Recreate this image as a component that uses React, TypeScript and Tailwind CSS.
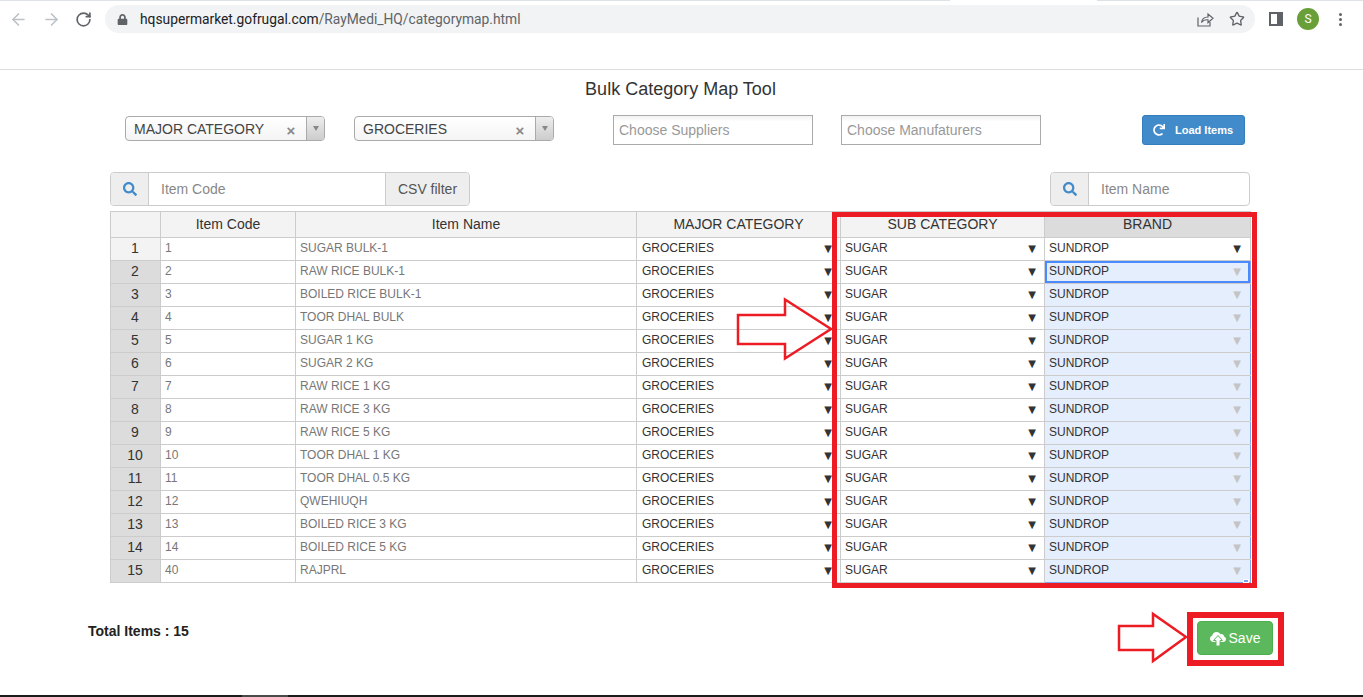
import { ArrowLeft, ArrowRight, RotateCw, Star } from "lucide-react"
import { FaLock, FaRedo, FaSearch } from "react-icons/fa"

const items = [
    ["1", "SUGAR BULK-1"],
    ["2", "RAW RICE BULK-1"],
    ["3", "BOILED RICE BULK-1"],
    ["4", "TOOR DHAL BULK"],
    ["5", "SUGAR 1 KG"],
    ["6", "SUGAR 2 KG"],
    ["7", "RAW RICE 1 KG"],
    ["8", "RAW RICE 3 KG"],
    ["9", "RAW RICE 5 KG"],
    ["10", "TOOR DHAL 1 KG"],
    ["11", "TOOR DHAL 0.5 KG"],
    ["12", "QWEHIUQH"],
    ["13", "BOILED RICE 3 KG"],
    ["14", "BOILED RICE 5 KG"],
    ["40", "RAJPRL"],
]

function BrowserBar() {
    return (
        <div className="h-[70px] shrink-0 border-b border-[#dcdcdc]">
            <div className="flex h-px">
                <div className="w-[950px] bg-[#dee1e6]" />
                <div className="w-[147px] bg-white" />
                <div className="flex-1 bg-[#dee1e6]" />
            </div>
            <div className="flex items-center h-[28px] mt-1 font-['Roboto',sans-serif]">
                <ArrowLeft size={19} strokeWidth={2} className="ml-[9px] text-[#bdc1c6]" />
                <ArrowRight size={19} strokeWidth={2} className="ml-[14px] text-[#bdc1c6]" />
                <RotateCw size={17} strokeWidth={2.4} className="ml-[14px] text-[#5f6368]" />
                <div className="ml-[13px] w-[1150px] h-[28px] rounded-full bg-[#f1f3f4] flex items-center">
                    <FaLock size={11} className="ml-[12px] text-[#5f6368]" />
                    <span className="ml-[12px] text-[13.8px] text-[#202124]">
                        hqsupermarket.gofrugal.com<span className="text-[#5f6368]">/RayMedi_HQ/categorymap.html</span>
                    </span>
                    <svg width="18" height="18" viewBox="0 0 18 18" fill="none" stroke="#5f6368" strokeWidth="1.2" className="ml-auto">
                        <path d="M2 7.5V16H14V12" />
                        <path d="M5.5 12.5C6 9 8.5 7 12 7V4l5 4.3-5 4.3V9.8c-2.800-.2-5 .6-6.500 2.700z" />
                    </svg>
                    <Star size={16} strokeWidth={2} className="ml-[15px] mr-[10px] text-[#5f6368]" />
                </div>
                <div className="ml-[14px] w-[14px] h-[14px] border-[2.5px] border-[#5f6368] border-r-[6px] bg-white" />
                <div className="ml-[14px] w-[22px] h-[22px] rounded-full bg-[#689f38] text-white text-[12px] flex items-center justify-center">S</div>
                <div className="ml-[20px] flex flex-col gap-[2px]">
                    <span className="w-[3px] h-[3px] rounded-full bg-[#5f6368]" />
                    <span className="w-[3px] h-[3px] rounded-full bg-[#5f6368]" />
                    <span className="w-[3px] h-[3px] rounded-full bg-[#5f6368]" />
                </div>
            </div>
        </div>
    )
}

function Chosen({ value }: { value: string }) {
    return (
        <div className="w-[200px] h-[25px] flex rounded-[4px] border border-[#aaa] bg-gradient-to-b from-white to-[#f4f4f4] overflow-hidden">
            <span className="flex-1 pl-2 text-[14px] leading-[24px] text-[#444]">{value}</span>
            <span className="w-[18px] mr-[6px] text-center text-[15px] font-bold leading-[27px] text-[#888]">×</span>
            <span className="w-[18px] border-l border-[#aaa] bg-gradient-to-b from-[#eee] to-[#ccc] flex items-center justify-center">
                <span className="border-x-[3.500px] border-x-transparent border-t-[5px] border-t-[#888]" />
            </span>
        </div>
    )
}

function Arrow({ open, right }: { open: boolean; right: string }) {
    return (
        <span className={`absolute top-0 font-['DejaVu_Sans',sans-serif] text-[10px] leading-[21px] ${right} ${open ? "text-[#333]" : "text-[#c4c4c4]"}`}>▼</span>
    )
}

function DropCell({ children, major }: { children: string; major?: boolean }) {
    return (
        <td className={`relative border border-[#ccc] pr-1 pb-[2px] text-[12px] leading-[18px] text-[#333] ${major ? "pl-[5px]" : "pl-1"}`}>
            {children}
            <Arrow open right={major ? "right-[8px]" : "right-[8px]"} />
        </td>
    )
}

export default function App() {
    return (
        <div className="relative h-[697px] overflow-hidden bg-white flex flex-col font-['Liberation_Sans',Arial,sans-serif] text-[#333]">
            <BrowserBar />

            <h1 className="mt-[9px] pr-[2px] text-center text-[18px] leading-[20px]">Bulk Category Map Tool</h1>

            <div className="mt-[16px] pl-[125px] flex items-start h-[30px]">
                <div className="mt-px"><Chosen value="MAJOR CATEGORY" /></div>
                <div className="mt-px ml-[29px]"><Chosen value="GROCERIES" /></div>
                <div className="ml-[59px] w-[200px] h-[30px] border border-[#aaa] bg-gradient-to-b from-[#f2f2f2] to-white to-[20%] pl-[5px] text-[14px] leading-[28px] text-[#999]">Choose Suppliers</div>
                <div className="ml-[28px] w-[200px] h-[30px] border border-[#aaa] bg-gradient-to-b from-[#f2f2f2] to-white to-[20%] pl-[5px] text-[14px] leading-[28px] text-[#999]">Choose Manufaturers</div>
                <button className="ml-[101px] w-[103px] h-[30px] rounded-[3px] bg-[#428bca] border border-[#357ebd] text-white text-[11px] font-bold flex items-center pl-[10px] gap-[10px]">
                    <FaRedo size={12} />
                    Load Items
                </button>
            </div>

            <div className="mt-[27px] px-[110px] pr-[113px] flex justify-between h-[34px] text-[14px]">
                <div className="flex w-[360px] border border-[#ccc] rounded-[4px]">
                    <span className="w-[38px] bg-[#eee] border-r border-[#ccc] rounded-l-[4px] flex items-center justify-center text-[#428bca]"><FaSearch size={14} /></span>
                    <span className="flex-1 pl-3 leading-[32px] text-[#888]">Item Code</span>
                    <span className="w-[84px] bg-[#eee] border-l border-[#ccc] rounded-r-[4px] text-center leading-[32px] text-[#555]">CSV filter</span>
                </div>
                <div className="flex w-[200px] border border-[#ccc] rounded-[4px]">
                    <span className="w-[38px] bg-[#eee] border-r border-[#ccc] rounded-l-[4px] flex items-center justify-center text-[#428bca]"><FaSearch size={14} /></span>
                    <span className="flex-1 pl-3 leading-[32px] text-[#888]">Item Name</span>
                </div>
            </div>

            <div className="mt-[5px] pl-[110px]">
                <table className="table-fixed border-collapse w-[1140px]">
                    <colgroup>
                        <col className="w-[50px]" />
                        <col className="w-[135px]" />
                        <col className="w-[341px]" />
                        <col className="w-[204px]" />
                        <col className="w-[204px]" />
                        <col className="w-[206px]" />
                    </colgroup>
                    <thead>
                        <tr className="h-[26px] text-[14px] font-normal">
                            <th className="border border-[#ccc] bg-[#f3f3f3] font-normal"></th>
                            <th className="border border-[#ccc] bg-[#f3f3f3] font-normal">Item Code</th>
                            <th className="border border-[#ccc] bg-[#f3f3f3] font-normal">Item Name</th>
                            <th className="border border-[#ccc] bg-[#f3f3f3] font-normal">MAJOR CATEGORY</th>
                            <th className="border border-[#ccc] bg-[#f3f3f3] font-normal">SUB CATEGORY</th>
                            <th className="border border-[#ccc] bg-[#dcdcdc] font-normal">BRAND</th>
                        </tr>
                    </thead>
                    <tbody>
                        {items.map((item, i) => (
                            <tr key={item[0]} className="h-[23px]">
                                <td className={`border border-[#ccc] pr-px pb-[2px] text-center text-[14px] leading-[18px] ${i === 0 ? "bg-[#f3f3f3]" : "bg-[#dcdcdc]"}`}>{i + 1}</td>
                                <td className="border border-[#ccc] px-1 pb-[2px] text-[12px] leading-[18px] text-[#777]">{item[0]}</td>
                                <td className="border border-[#ccc] px-1 pb-[2px] text-[12px] leading-[18px] text-[#777]">{item[1]}</td>
                                <DropCell major>GROCERIES</DropCell>
                                <DropCell>SUGAR</DropCell>
                                <td className={`relative border border-[#ccc] px-1 pb-[2px] text-[12px] leading-[18px] text-[#333] ${i === 0 ? "" : "bg-[#e5eefd] border-l-[#7aa7f0] border-r-[#7aa7f0]"} ${i === 1 ? "shadow-[inset_0_0_0_2px_#4b89ff]" : ""} ${i === 14 ? "border-b-[#7aa7f0]" : ""}`}>
                                    SUNDROP
                                    <Arrow open={i === 0} right="right-[9px]" />
                                </td>
                            </tr>
                        ))}
                    </tbody>
                </table>
            </div>

            <div className="mt-[38px] pl-[88px] pr-[90px] flex justify-between items-start">
                <span className="mt-px text-[14px] leading-[18px] font-bold text-[#222]">Total Items : 15</span>
                <button className="w-[76px] h-[34px] rounded-[4px] bg-[#5cb85c] border border-[#4cae4c] text-white text-[14px] flex items-center justify-center gap-[3px]">
                    <svg width="16" height="15" viewBox="0 0 16 15" fill="white">
                        <path d="M3.500 11C1.600 11 0 9.600 0 7.700 0 6.200 1 5 2.300 4.600 2.500 2.600 4.300 1 6.500 1c1.700 0 3.100.9 3.800 2.300.4-.2.800-.3 1.200-.3 1.400 0 2.500 1.100 2.600 2.400C15.200 5.800 16 6.900 16 8.200 16 9.800 14.700 11 13 11z" />
                        <path d="M8 4.500L12.500 9.500H10V15H6V9.500H3.500Z" stroke="#5cb85c" strokeWidth="1" />
                    </svg>
                    Save
                </button>
            </div>

            <div className="mt-auto h-[2px] bg-[#1c1c1c] shrink-0 flex">
                <div className="ml-[242px] w-[46px] bg-[#4a4a4a]" />
            </div>

            {/* annotations on top of the page */}
            <div className="absolute left-[1243px] top-[579px] w-[6px] h-[4px] bg-[#7aa7f0] border border-white" />
            <div className="absolute left-[832px] top-[212px] w-[425px] h-[376px] border-[5px] border-[#ed1c24]" />
            <div className="absolute left-[1187px] top-[612px] w-[97px] h-[54px] border-[6px] border-[#ed1c24]" />
            <svg className="absolute left-0 top-0 pointer-events-none" width="1363" height="697" fill="none" stroke="#ed1c24" strokeWidth="2.500">
                <path d="M738 315H785V299.500L831 329L785 358.500V344H738Z" />
                <path d="M1119 626H1153V614L1186 637L1153 661V650H1119Z" />
            </svg>
        </div>
    )
}
